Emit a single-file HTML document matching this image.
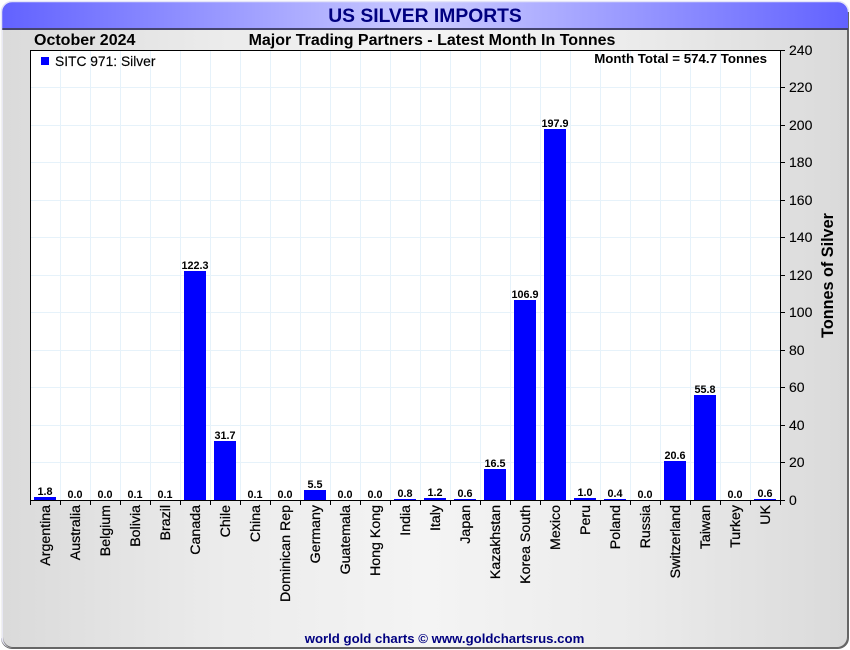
<!DOCTYPE html>
<html><head><meta charset="utf-8"><style>
html,body{margin:0;padding:0;background:#fff;width:850px;height:650px;overflow:hidden}
svg{display:block}
text{font-family:"Liberation Sans",sans-serif;fill:#000}
.v{font-size:10.800px;font-weight:bold;text-anchor:middle}
.c{font-size:14.200px;text-anchor:end;stroke:#000;stroke-width:.25px}
.y{font-size:14px;stroke:#000;stroke-width:.1px}
</style></head><body>
<svg width="850" height="650" viewBox="0 0 850 650" xmlns="http://www.w3.org/2000/svg">
<defs>
<linearGradient id="bg" x1="0" x2="1" y1="0" y2="0"><stop offset="0" stop-color="#dadada"/><stop offset=".25" stop-color="#ebebeb"/><stop offset=".5" stop-color="#f4f4f4"/><stop offset=".75" stop-color="#ebebeb"/><stop offset="1" stop-color="#dadada"/></linearGradient>
<linearGradient id="tb" x1="0" x2="1" y1="0" y2="0"><stop offset="0" stop-color="#6262ff"/><stop offset=".5" stop-color="#ccccff"/><stop offset="1" stop-color="#6262ff"/></linearGradient>
<clipPath id="tc"><path d="M2 29V12A10 10 0 0 1 12 2H838A10 10 0 0 1 848 12V29Z"/></clipPath>
</defs>
<rect x="1" y="1" width="848" height="648" rx="11" fill="#666"/>
<rect x="1" y="1" width="847" height="647" rx="11" fill="#e6e6f5"/>
<rect x="3" y="3" width="845" height="645" rx="10" fill="#666"/>
<rect x="3" y="2" width="844" height="645" rx="10" fill="url(#bg)"/>
<rect x="2" y="2" width="846" height="27" fill="url(#tb)" clip-path="url(#tc)"/>
<rect x="2" y="28" width="846" height="2" fill="#44446e"/>
<path d="M1.5 30V12A10.500 10.500 0 0 1 12 1.500H838A10.500 10.500 0 0 1 848.500 12" fill="none" stroke="#e4e4f8" stroke-width="1.500"/>
<path d="M1.500 30V638" stroke="#f0f0f0" stroke-width="1.500" fill="none"/>
<text x="425" y="22" text-anchor="middle" style="font-size:19.300px;font-weight:bold;fill:#000080">US SILVER IMPORTS</text>
<text x="34" y="45" style="font-size:16px;font-weight:bold">October 2024</text>
<text x="432" y="45" text-anchor="middle" style="font-size:16px;font-weight:bold">Major Trading Partners - Latest Month In Tonnes</text>
<rect x="30" y="50" width="750" height="450" fill="#fff"/>
<path stroke="#e6f2fa" stroke-width="1" fill="none" d="M60.500 50V500M90.500 50V500M120.500 50V500M150.500 50V500M180.500 50V500M210.500 50V500M240.500 50V500M270.500 50V500M300.500 50V500M330.500 50V500M360.500 50V500M390.500 50V500M420.500 50V500M450.500 50V500M480.500 50V500M510.500 50V500M540.500 50V500M570.500 50V500M600.500 50V500M630.500 50V500M660.500 50V500M690.500 50V500M720.500 50V500M750.500 50V500M30 87.500H780M30 125.500H780M30 162.500H780M30 200.500H780M30 237.500H780M30 275.500H780M30 312.500H780M30 350.500H780M30 387.500H780M30 425.500H780M30 462.500H780"/>
<g fill="#0000ff">
<rect x="34" y="497" width="22" height="3"/>
<rect x="184" y="271" width="22" height="229"/>
<rect x="214" y="441" width="22" height="59"/>
<rect x="304" y="490" width="22" height="10"/>
<rect x="394" y="499" width="22" height="1"/>
<rect x="424" y="498" width="22" height="2"/>
<rect x="454" y="499" width="22" height="1"/>
<rect x="484" y="469" width="22" height="31"/>
<rect x="514" y="300" width="22" height="200"/>
<rect x="544" y="129" width="22" height="371"/>
<rect x="574" y="498" width="22" height="2"/>
<rect x="604" y="499" width="22" height="1"/>
<rect x="664" y="461" width="22" height="39"/>
<rect x="694" y="395" width="22" height="105"/>
<rect x="754" y="499" width="22" height="1"/>
</g>
<path stroke="#000" fill="none" d="M30.500 50.500H780.500V500.500H30.500ZM30.500 500V505M60.500 500V505M90.500 500V505M120.500 500V505M150.500 500V505M180.500 500V505M210.500 500V505M240.500 500V505M270.500 500V505M300.500 500V505M330.500 500V505M360.500 500V505M390.500 500V505M420.500 500V505M450.500 500V505M480.500 500V505M510.500 500V505M540.500 500V505M570.500 500V505M600.500 500V505M630.500 500V505M660.500 500V505M690.500 500V505M720.500 500V505M750.500 500V505M780.500 500V505M780 50.500H785M780 87.500H785M780 125.500H785M780 162.500H785M780 200.500H785M780 237.500H785M780 275.500H785M780 312.500H785M780 350.500H785M780 387.500H785M780 425.500H785M780 462.500H785M780 500.500H785"/>
<rect x="41" y="57" width="8" height="8" fill="#0000ff"/>
<text x="55" y="66" style="font-size:13.800px;stroke:#000;stroke-width:.15px">SITC 971: Silver</text>
<text x="767" y="63" text-anchor="end" style="font-size:13.300px;font-weight:bold">Month Total = 574.7 Tonnes</text>
<g>
<text class="v" x="45" y="495">1.8</text>
<text class="v" x="75" y="498">0.0</text>
<text class="v" x="105" y="498">0.0</text>
<text class="v" x="135" y="498">0.1</text>
<text class="v" x="165" y="498">0.1</text>
<text class="v" x="195" y="269">122.3</text>
<text class="v" x="225" y="439">31.7</text>
<text class="v" x="255" y="498">0.1</text>
<text class="v" x="285" y="498">0.0</text>
<text class="v" x="315" y="488">5.5</text>
<text class="v" x="345" y="498">0.0</text>
<text class="v" x="375" y="498">0.0</text>
<text class="v" x="405" y="497">0.8</text>
<text class="v" x="435" y="496">1.2</text>
<text class="v" x="465" y="497">0.6</text>
<text class="v" x="495" y="467">16.5</text>
<text class="v" x="525" y="298">106.9</text>
<text class="v" x="555" y="127">197.9</text>
<text class="v" x="585" y="496">1.0</text>
<text class="v" x="615" y="497">0.4</text>
<text class="v" x="645" y="498">0.0</text>
<text class="v" x="675" y="459">20.6</text>
<text class="v" x="705" y="393">55.8</text>
<text class="v" x="735" y="498">0.0</text>
<text class="v" x="765" y="497">0.6</text>
</g>
<g>
<text class="c" transform="translate(50,505) rotate(-90)">Argentina</text>
<text class="c" transform="translate(80,505) rotate(-90)">Australia</text>
<text class="c" transform="translate(110,505) rotate(-90)">Belgium</text>
<text class="c" transform="translate(140,505) rotate(-90)">Bolivia</text>
<text class="c" transform="translate(170,505) rotate(-90)">Brazil</text>
<text class="c" transform="translate(200,505) rotate(-90)">Canada</text>
<text class="c" transform="translate(230,505) rotate(-90)">Chile</text>
<text class="c" transform="translate(260,505) rotate(-90)">China</text>
<text class="c" transform="translate(290,505) rotate(-90)">Dominican Rep</text>
<text class="c" transform="translate(320,505) rotate(-90)">Germany</text>
<text class="c" transform="translate(350,505) rotate(-90)">Guatemala</text>
<text class="c" transform="translate(380,505) rotate(-90)">Hong Kong</text>
<text class="c" transform="translate(410,505) rotate(-90)">India</text>
<text class="c" transform="translate(440,505) rotate(-90)">Italy</text>
<text class="c" transform="translate(470,505) rotate(-90)">Japan</text>
<text class="c" transform="translate(500,505) rotate(-90)">Kazakhstan</text>
<text class="c" transform="translate(530,505) rotate(-90)">Korea South</text>
<text class="c" transform="translate(560,505) rotate(-90)">Mexico</text>
<text class="c" transform="translate(590,505) rotate(-90)">Peru</text>
<text class="c" transform="translate(620,505) rotate(-90)">Poland</text>
<text class="c" transform="translate(650,505) rotate(-90)">Russia</text>
<text class="c" transform="translate(680,505) rotate(-90)">Switzerland</text>
<text class="c" transform="translate(710,505) rotate(-90)">Taiwan</text>
<text class="c" transform="translate(740,505) rotate(-90)">Turkey</text>
<text class="c" transform="translate(770,505) rotate(-90)">UK</text>
</g>
<g>
<text class="y" x="789" y="55">240</text>
<text class="y" x="789" y="92">220</text>
<text class="y" x="789" y="130">200</text>
<text class="y" x="789" y="167">180</text>
<text class="y" x="789" y="205">160</text>
<text class="y" x="789" y="242">140</text>
<text class="y" x="789" y="280">120</text>
<text class="y" x="789" y="317">100</text>
<text class="y" x="789" y="355">80</text>
<text class="y" x="789" y="392">60</text>
<text class="y" x="789" y="430">40</text>
<text class="y" x="789" y="467">20</text>
<text class="y" x="789" y="505">0</text>
</g>
<text transform="translate(833,275.500) rotate(-90)" text-anchor="middle" style="font-size:16.200px;font-weight:bold">Tonnes of Silver</text>
<text x="444.500" y="643" text-anchor="middle" style="font-size:13.200px;font-weight:bold;fill:#000080">world gold charts © www.goldchartsrus.com</text>
</svg>
</body></html>
